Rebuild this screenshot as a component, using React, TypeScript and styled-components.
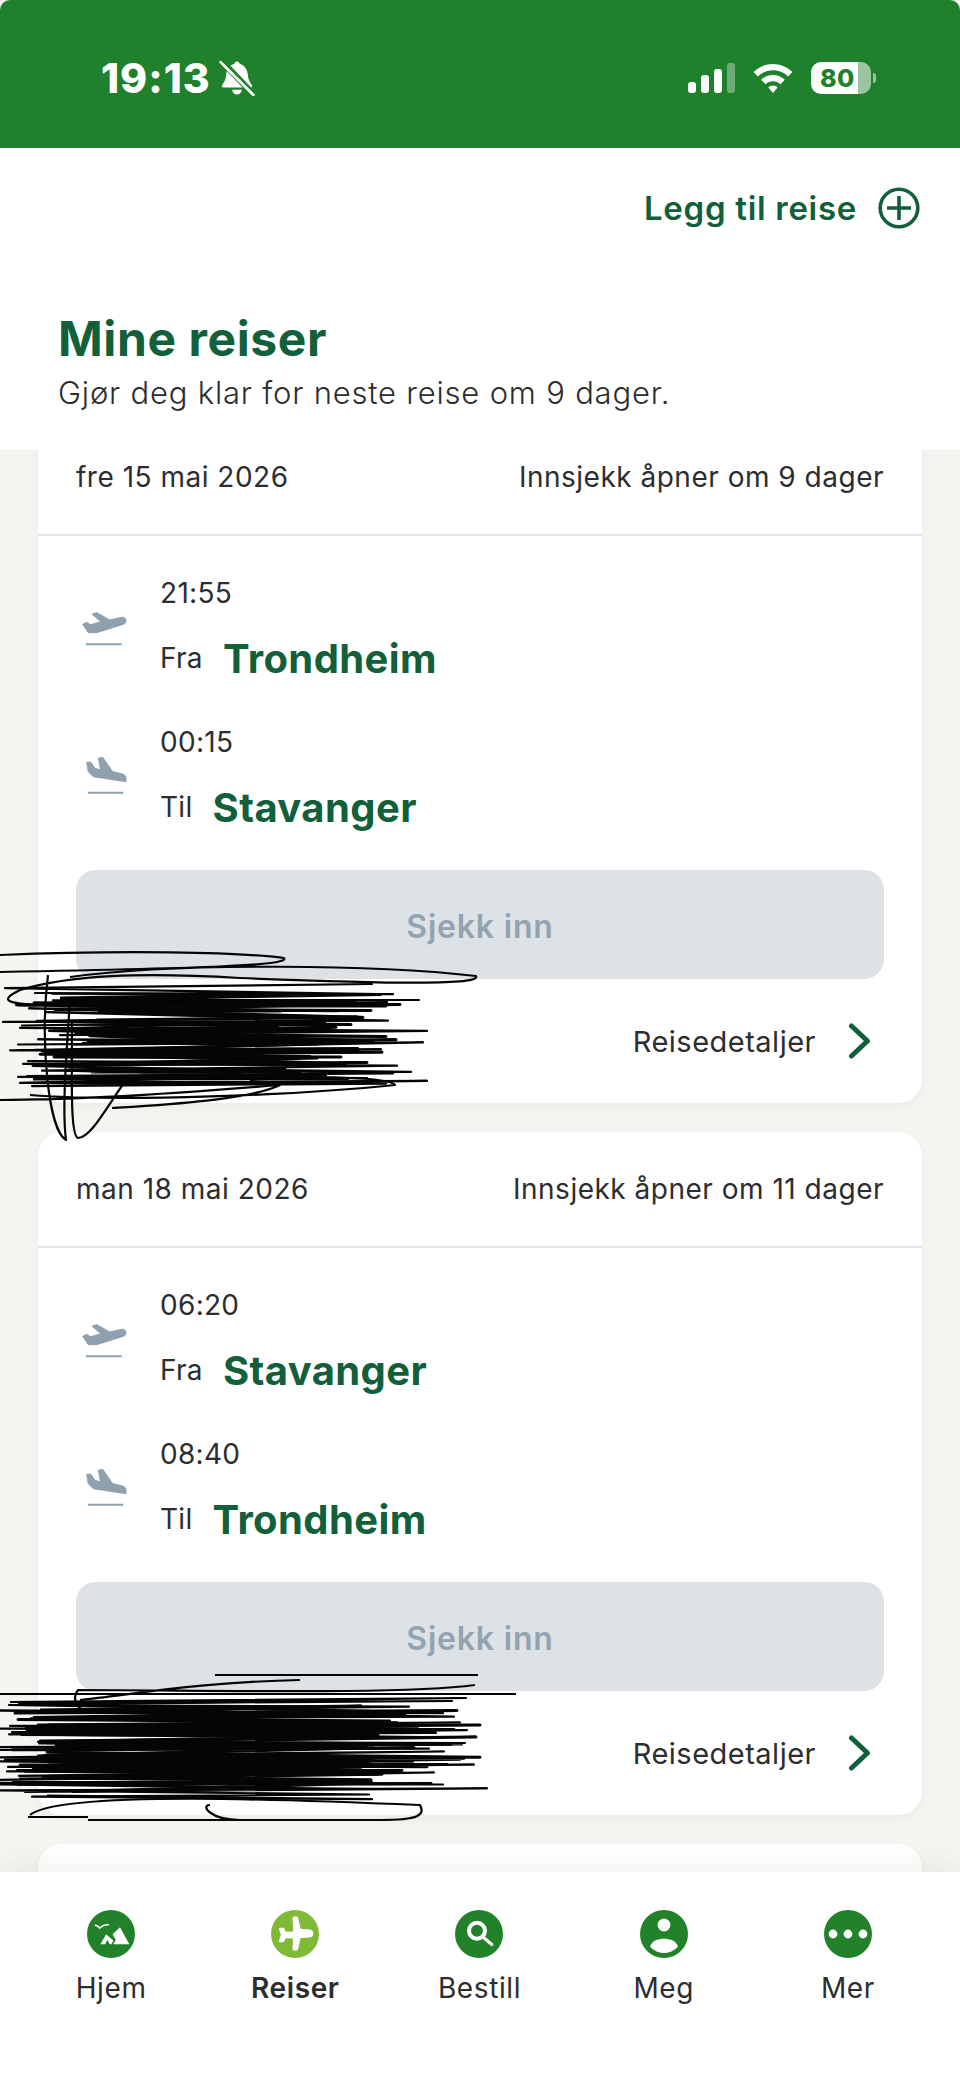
import { FC, ReactNode } from "react";
import styled, { createGlobalStyle } from "styled-components";

const GREEN = "#11603a";
const TEXT = "#2c2d2f";
const FONT = `Inter, "Liberation Sans", sans-serif`;

interface Leg {
  time: string;
  label: string;
  city: string;
  kind: "takeoff" | "land";
}

interface Trip {
  date: string;
  checkin: string;
  legs: Leg[];
}

const trips: Trip[] = [
  {
    date: "fre 15 mai 2026",
    checkin: "Innsjekk åpner om 9 dager",
    legs: [
      { time: "21:55", label: "Fra", city: "Trondheim", kind: "takeoff" },
      { time: "00:15", label: "Til", city: "Stavanger", kind: "land" },
    ],
  },
  {
    date: "man 18 mai 2026",
    checkin: "Innsjekk åpner om 11 dager",
    legs: [
      { time: "06:20", label: "Fra", city: "Stavanger", kind: "takeoff" },
      { time: "08:40", label: "Til", city: "Trondheim", kind: "land" },
    ],
  },
];

// scribble over the personal data, seeded so every render is the same
const scribble = (seed: number, top: number, bottom: number, left: number, right: number, lines: number) => {
  let s = seed;
  const rnd = () => {
    s = (s * 16807) % 2147483647;
    return s / 2147483647;
  };
  let d = `M${left} ${top}`;
  for (let i = 0; i < lines; i++) {
    const y = top + ((bottom - top) * i) / lines + rnd() * 8 - 4;
    const x = i % 2 ? left + rnd() * 70 - 30 : right - rnd() * 130;
    d += ` L${x.toFixed(0)} ${y.toFixed(1)}`;
  }
  return d;
};

const BellOffIcon = () => (
  <svg width="36" height="36" viewBox="0 0 34 34">
    <path d="M17 1.5c1.500 0 2.400 1 2.600 2.300 5 1.200 7.200 5.400 7.600 10.200.3 4.200 1.800 7 3.800 9.600.8 1.100.2 2.400-1.300 2.400H4.300c-1.500 0-2.100-1.300-1.300-2.400 2-2.600 3.500-5.400 3.800-9.600.4-4.800 2.600-9 7.600-10.200.2-1.300 1.100-2.300 2.600-2.300z" fill="#fff" />
    <path d="M12.500 28h9c-.3 2.700-2.100 4.500-4.500 4.500s-4.200-1.800-4.500-4.500z" fill="#fff" />
    <path d="M2.500 1 33 33" stroke="#1f812b" strokeWidth="6" />
    <path d="M1.500 2 32.500 33" stroke="#fff" strokeWidth="2.600" strokeLinecap="round" />
  </svg>
);

const SignalIcon = () => (
  <svg width="47" height="30" viewBox="0 0 47 30">
    <rect x="0" y="19" width="8" height="11" rx="3" fill="#fff" />
    <rect x="13" y="12" width="8" height="18" rx="3" fill="#fff" />
    <rect x="26" y="6" width="8" height="24" rx="3" fill="#fff" />
    <rect x="39" y="0" width="8" height="30" rx="3" fill="#fff" fillOpacity="0.35" />
  </svg>
);

const WifiIcon = () => (
  <svg width="40" height="29" viewBox="0 0 40 29">
    <path d="M20 0C12.500 0 5.700 3 .6 8l4.300 4.400C8.800 8.600 14.100 6.300 20 6.300s11.200 2.300 15.100 6.100L39.400 8C34.300 3 27.500 0 20 0z" fill="#fff" />
    <path d="M20 11c-4.600 0-8.700 1.800-11.800 4.800l4.300 4.400c2-1.900 4.600-3 7.500-3s5.500 1.100 7.500 3l4.300-4.400C28.700 12.800 24.600 11 20 11z" fill="#fff" />
    <path d="M20 21.500c-1.900 0-3.500.7-4.600 1.900L20 29l4.600-5.600c-1.100-1.200-2.700-1.900-4.600-1.900z" fill="#fff" />
  </svg>
);

const PlusIcon = () => (
  <svg width="42" height="42" viewBox="0 0 42 42" fill="none" stroke={GREEN} strokeWidth="3.600">
    <circle cx="21" cy="21" r="18.800" />
    <path d="M21 9v24M9 21h24" />
  </svg>
);

const FlightIcon: FC<{ kind: Leg["kind"] }> = ({ kind }) =>
  kind === "takeoff" ? (
    <svg width="84" height="60" viewBox="0 0 84 60" fill="#8fa1af">
      <path d="M6.700 26.300 10.700 24.300 14.700 26.700 24.700 23.700 16 16 20.700 14.700 34 22 45.700 19.300C48 18.800 50 20.500 50 22.700 50 24.300 49 25.700 47.300 26.300L20.700 34.700H12.300z" strokeLinejoin="round" stroke="#8fa1af" />
      <path d="M10 46.300H45.700" stroke="#8fa1af" strokeWidth="2" />
    </svg>
  ) : (
    <svg width="84" height="60" viewBox="0 0 84 60" fill="#8fa1af">
      <path d="M10.700 15.300 14.700 15 19 21.300 24.700 23 22.300 11.300 26.700 10.300 36.700 24.700 46.700 27C49 28 50 29.500 50 31.300V34.700L17.300 29.700 12.300 24.700z" strokeLinejoin="round" stroke="#8fa1af" />
      <path d="M12 45.700H47.300" stroke="#8fa1af" strokeWidth="2" />
    </svg>
  );

const ChevronIcon = () => (
  <svg width="24" height="36" viewBox="0 0 24 36" fill="none" stroke={GREEN} strokeWidth="5" strokeLinecap="round" strokeLinejoin="round">
    <path d="M3.500 3 19.500 18 3.500 33" />
  </svg>
);

const HomeIcon = () => (
  <svg width="48" height="48" viewBox="0 0 48 48">
    <circle cx="24" cy="24" r="24" fill="#228229" />
    <path d="M7.700 15c2 .3 3.600 1.200 5 3 2.500-2.600 5.500-3.700 9.300-3.200" fill="none" stroke="#fff" strokeWidth="1.500" />
    <path d="M33 17.300 42.300 34.300H26.200L28.800 30 25.600 24.300z" fill="#fff" />
    <path d="M19 24.300 13.500 34.300H18L20.500 30 22.800 34.300H24.300L26.400 30.600z" fill="#fff" />
  </svg>
);

const TripsIcon = () => (
  <svg width="48" height="48" viewBox="0 0 48 48">
    <circle cx="24" cy="24" r="24" fill="#80b935" />
    <path d="M21.500 9c0-1.500 1-2.200 2.300-2.200h1.200c1.200 0 1.900.7 2.300 2.200l2.300 10.400 9.300.6c2 .2 3.500 2.100 3.500 4s-1.500 3.800-3.500 4l-9.300.6L27.300 39c-.4 1.500-1.100 2.200-2.300 2.200h-1.200c-1.300 0-2.300-.7-2.300-2.200l.5-9.800-7.500-.4-1 2.500c-.5 1.100-1.200 1.500-2.200 1.500H9.200c-1 0-1.500-.8-1.200-1.800l1.500-4.200c.3-1 .3-1.600 0-2.600L8 20.200c-.3-1 .2-1.800 1.200-1.800h2.300c1 0 1.700.4 2.200 1.500l1 2.500 7.500-.4z" fill="#fff" transform="translate(0 -.6)" />
  </svg>
);

const SearchIcon = () => (
  <svg width="48" height="48" viewBox="0 0 48 48" fill="none">
    <circle cx="24" cy="24" r="24" fill="#228229" />
    <circle cx="22" cy="20.700" r="8" stroke="#fff" strokeWidth="4" />
    <path d="M28.500 27.500 36.800 34.500" stroke="#fff" strokeWidth="3.200" strokeLinecap="round" />
  </svg>
);

const UserIcon = () => (
  <svg width="48" height="48" viewBox="0 0 48 48">
    <circle cx="24" cy="24" r="24" fill="#228229" />
    <circle cx="24" cy="15" r="6.400" fill="#fff" />
    <path d="M10 36.500C12 31 17.500 28.800 24 28.800S36 31 38 36.500C34.500 40.500 29.500 43 24 43S13.500 40.500 10 36.500z" fill="#fff" />
  </svg>
);

const MoreIcon = () => (
  <svg width="48" height="48" viewBox="0 0 48 48" fill="#fff">
    <circle cx="24" cy="24" r="24" fill="#228229" />
    <circle cx="9" cy="24" r="4.400" />
    <circle cx="24" cy="24" r="4.400" />
    <circle cx="39" cy="24" r="4.400" />
  </svg>
);

const navItems: { label: string; icon: ReactNode; active?: boolean }[] = [
  { label: "Hjem", icon: <HomeIcon /> },
  { label: "Reiser", icon: <TripsIcon />, active: true },
  { label: "Bestill", icon: <SearchIcon /> },
  { label: "Meg", icon: <UserIcon /> },
  { label: "Mer", icon: <MoreIcon /> },
];

const TripCard: FC<{ trip: Trip }> = ({ trip }) => (
  <Card>
    <CardHeader>
      <span>{trip.date}</span>
      <span>{trip.checkin}</span>
    </CardHeader>
    <CardBody>
      <Legs>
        {trip.legs.map((leg) => (
          <LegRow key={leg.time}>
            <FlightIcon kind={leg.kind} />
            <div>
              <LegTime>{leg.time}</LegTime>
              <LegPlace>
                <LegLabel>{leg.label}</LegLabel>
                <City>{leg.city}</City>
              </LegPlace>
            </div>
          </LegRow>
        ))}
      </Legs>
      <CheckinButton>Sjekk inn</CheckinButton>
      <DetailsLink>
        <span>Reisedetaljer</span>
        <ChevronIcon />
      </DetailsLink>
    </CardBody>
  </Card>
);

export default function App() {
  return (
    <Screen>
      <GlobalStyle />
      <StatusBar>
        <StatusLeft>
          <Clock>19:13</Clock>
          <BellOffIcon />
        </StatusLeft>
        <StatusRight>
          <SignalIcon />
          <WifiIcon />
          <Battery>
            <BatteryBody>80</BatteryBody>
            <BatteryNub />
          </Battery>
        </StatusRight>
      </StatusBar>
      <TopPanel>
        <AddTrip>
          <span>Legg til reise</span>
          <PlusIcon />
        </AddTrip>
        <Title>Mine reiser</Title>
        <Subtitle>Gjør deg klar for neste reise om 9 dager.</Subtitle>
      </TopPanel>
      <TripList>
        {trips.map((trip) => (
          <TripCard key={trip.date} trip={trip} />
        ))}
        <Card />
      </TripList>
      <BottomNav>
        {navItems.map((item) => (
          <NavItem key={item.label} $active={item.active}>
            {item.icon}
            <span>{item.label}</span>
          </NavItem>
        ))}
      </BottomNav>
      <ScribbleLayer viewBox="0 0 960 2087" fill="none" stroke="#050505" strokeWidth="2.200" strokeLinejoin="round">
        <path d={scribble(11, 988, 1088, 32, 430, 62)} />
        <path d={scribble(29, 998, 1078, 60, 400, 50)} strokeWidth="3" />
        <path d="M0 955C120 950 240 952 284 958 290 966 200 968 0 972M70 977C180 962 380 965 476 976 480 984 420 985 240 978 140 972 70 975 20 990 0 1000 0 1005 60 1005L388 1002" />
        <path d="M48 975C40 1040 48 1130 66 1140 62 1110 66 1060 70 1000M72 1020C72 1080 70 1135 78 1138 92 1138 110 1100 130 1075M0 1100C100 1100 220 1090 280 1085 250 1100 160 1105 112 1108M30 1095C120 1102 300 1095 395 1085 390 1078 330 1075 250 1080" />
        <path d={scribble(47, 1702, 1800, 10, 490, 72)} />
        <path d={scribble(83, 1710, 1790, 40, 480, 58)} strokeWidth="3" />
        <path d="M215 1675H478M300 1680C200 1682 130 1695 80 1700M0 1694H516M475 1685C400 1695 200 1690 78 1690 70 1700 80 1712 90 1712M30 1815C60 1790 300 1800 420 1805 425 1815 420 1820 380 1820H240C210 1820 200 1805 210 1805M28 1817H88M88 1820H330" />
      </ScribbleLayer>
    </Screen>
  );
}

const GlobalStyle = createGlobalStyle`
  html, body {
    margin: 0;
    padding: 0;
    background: #fff;
  }
  body {
    font-family: ${FONT};
  }
`;

const Screen = styled.div`
  position: relative;
  width: 960px;
  height: 2087px;
  display: flex;
  flex-direction: column;
  overflow: hidden;
  background: #f6f5f1;
  color: ${TEXT};
`;

const StatusBar = styled.header`
  flex: 0 0 148px;
  box-sizing: border-box;
  display: flex;
  align-items: center;
  justify-content: space-between;
  padding: 8px 84px 0 101px;
  background: #1f812b;
  border-radius: 10px 10px 0 0;
`;

const StatusLeft = styled.div`
  display: flex;
  align-items: center;
  gap: 8px;
`;

const Clock = styled.span`
  font-size: 41px;
  font-weight: 800;
  line-height: 44px;
  letter-spacing: 1px;
  color: #fff;
`;

const StatusRight = styled.div`
  display: flex;
  align-items: center;
  gap: 18px;
`;

const Battery = styled.div`
  display: flex;
  align-items: center;
  gap: 2px;
`;

const BatteryBody = styled.div`
  width: 60px;
  height: 32px;
  display: flex;
  align-items: center;
  padding-left: 9px;
  box-sizing: border-box;
  border-radius: 10px;
  background: linear-gradient(90deg, #fff 78%, rgba(255, 255, 255, 0.55) 78%);
  color: #1f812b;
  font-size: 25px;
  font-weight: 800;
  letter-spacing: 0.5px;
`;

const BatteryNub = styled.div`
  width: 3px;
  height: 10px;
  border-radius: 0 3px 3px 0;
  background: rgba(255, 255, 255, 0.55);
`;

const TopPanel = styled.section`
  flex: 0 0 302px;
  box-sizing: border-box;
  padding: 39px 40px 0 58px;
  background: #fff;
  position: relative;
  z-index: 1;
`;

const AddTrip = styled.div`
  display: flex;
  align-items: center;
  justify-content: flex-end;
  gap: 21px;
  color: ${GREEN};
  font-size: 33px;
  font-weight: 600;
  line-height: 42px;
  letter-spacing: 0.7px;
`;

const Title = styled.h1`
  margin: 82px 0 0;
  color: ${GREEN};
  font-size: 48px;
  font-weight: 700;
  line-height: 56px;
  letter-spacing: 0.6px;
`;

const Subtitle = styled.p`
  margin: 6px 0 0;
  font-size: 31px;
  font-weight: 300;
  line-height: 40px;
  letter-spacing: 0.8px;
`;

const TripList = styled.main`
  flex: 1;
  min-height: 0;
  margin-top: -30px;
  padding: 0 38px;
  display: flex;
  flex-direction: column;
  gap: 29px;
`;

const Card = styled.article`
  flex-shrink: 0;
  min-height: 60px;
  background: #fff;
  border-radius: 24px;
  box-shadow: 0 4px 10px rgba(60, 60, 40, 0.06);
`;

const CardHeader = styled.div`
  height: 116px;
  box-sizing: border-box;
  display: flex;
  align-items: center;
  justify-content: space-between;
  padding: 0 38px;
  font-size: 28px;
  font-weight: 400;
  letter-spacing: 0.5px;
  border-bottom: 2px solid #e1e5ea;
`;

const CardBody = styled.div`
  padding: 37px 38px 0;
`;

const Legs = styled.div`
  display: flex;
  flex-direction: column;
  gap: 39px;
`;

const LegRow = styled.div`
  display: flex;
  align-items: center;
`;

const LegTime = styled.div`
  font-size: 28px;
  line-height: 40px;
  letter-spacing: 0.3px;
`;

const LegPlace = styled.div`
  margin-top: 20px;
  display: flex;
  align-items: center;
  gap: 20px;
  height: 50px;
`;

const LegLabel = styled.span`
  font-size: 28px;
  letter-spacing: 0.3px;
`;

const City = styled.span`
  color: ${GREEN};
  font-size: 40px;
  font-weight: 700;
  letter-spacing: 0.4px;
`;

const CheckinButton = styled.div`
  margin-top: 38px;
  height: 109px;
  box-sizing: border-box;
  padding-top: 3px;
  display: flex;
  align-items: center;
  justify-content: center;
  border-radius: 20px;
  background: #dde2e7;
  color: #93a3b0;
  font-size: 32px;
  font-weight: 600;
  letter-spacing: 0.8px;
`;

const DetailsLink = styled.div`
  height: 124px;
  display: flex;
  align-items: center;
  justify-content: flex-end;
  gap: 32px;
  padding-right: 12px;
  font-size: 29px;
  letter-spacing: 0.5px;
`;

const BottomNav = styled.nav`
  position: relative;
  z-index: 1;
  flex: 0 0 215px;
  box-sizing: border-box;
  display: grid;
  grid-template-columns: repeat(5, 1fr);
  padding: 38px 20px 0 19px;
  background: #fff;
  box-shadow: 0 -10px 24px rgba(60, 60, 40, 0.06);
`;

const NavItem = styled.div<{ $active?: boolean }>`
  display: flex;
  flex-direction: column;
  align-items: center;
  gap: 10px;
  font-size: 28px;
  line-height: 40px;
  letter-spacing: 0.6px;
  font-weight: ${({ $active }) => ($active ? 600 : 400)};
`;

const ScribbleLayer = styled.svg`
  position: absolute;
  top: 0;
  left: 0;
  width: 960px;
  height: 2087px;
  z-index: 2;
  pointer-events: none;
`;
